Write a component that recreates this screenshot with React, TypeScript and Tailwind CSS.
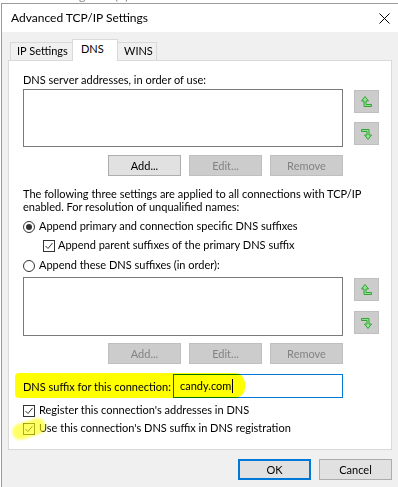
import clsx from "clsx";

function Btn({ label, disabled }: { label: string; disabled?: boolean }) {
  return (
    <div
      className={clsx(
        "h-[21px] w-[73px] border flex items-center justify-center leading-none",
        disabled
          ? "bg-[#cccccc] border-[#bfbfbf] text-[#838383]"
          : "bg-[#e1e1e1] border-[#adadad] text-black"
      )}
    >
      {label}
    </div>
  );
}

function ArrowIcon({ down }: { down?: boolean }) {
  return (
    <svg
      width="11"
      height="12"
      viewBox="0 0 11 12"
      className={down ? "rotate-180" : ""}
    >
      <path
        d="M4 0.5 L7.5 5 H5 V8.5 H10.5 V10.5 H3 V5 H0.5 Z"
        fill="#8ee38e"
        stroke="#35a335"
        strokeWidth="1"
        strokeLinejoin="miter"
      />
    </svg>
  );
}

function ArrowBtn({ down }: { down?: boolean }) {
  return (
    <div className="w-[25px] h-[23px] bg-[#cccccc] border border-[#bfbfbf] flex items-center justify-center">
      <ArrowIcon down={down} />
    </div>
  );
}

function Radio({ checked }: { checked?: boolean }) {
  return (
    <span className="w-[12px] h-[12px] rounded-full border border-[#333333] bg-white flex items-center justify-center shrink-0">
      {checked && <span className="w-[6px] h-[6px] rounded-full bg-[#333333]" />}
    </span>
  );
}

function Check() {
  return (
    <span className="w-[12px] h-[12px] border border-[#333333] bg-white flex items-center justify-center shrink-0">
      <svg width="10" height="10" viewBox="0 0 10 10">
        <path d="M1.5 5 L4 7.5 L8.5 2" stroke="#333333" strokeWidth="1" fill="none" />
      </svg>
    </span>
  );
}

function ListWithArrows({ h, gap }: { h: string; gap: string }) {
  return (
    <div className="flex">
      <div className={clsx("w-[320px] border border-[#7a7a7a] bg-white", h)} />
      <div className={clsx("ml-[11px] pt-[1px] flex flex-col", gap)}>
        <ArrowBtn />
        <ArrowBtn down />
      </div>
    </div>
  );
}

export default function App() {
  return (
    <div className="w-[398px] h-[487px] bg-white overflow-hidden flex flex-col font-['Lato',sans-serif] text-[11px] text-black whitespace-nowrap">
      {/* window behind, mostly hidden */}
      <div className="h-[3px] shrink-0 overflow-hidden pl-[10px]">
        <div className="-mt-[12px] h-[16px] leading-[16px] text-[12px] text-[#8a8a8a]">
          Connect using: Intel(R) Ethernet Connection I219-LM
        </div>
      </div>

      <div className="flex-1 ml-px border-l border-t border-[#9a9a9a] flex flex-col bg-[#f0f0f0]">
        {/* title bar */}
        <div className="h-[28px] bg-white flex items-center justify-between pl-[9px] pr-[8px]">
          <span className="text-[12px]">Advanced TCP/IP Settings</span>
          <svg width="11" height="11" viewBox="0 0 11 11">
            <path d="M0.5 0.5 L10.5 10.5 M10.5 0.5 L0.5 10.5" stroke="#000" strokeWidth="1" />
          </svg>
        </div>

        <div className="pl-[6px] pr-[6px] flex flex-col">
          {/* tabs */}
          <div className="mt-[7px] flex items-end pl-[2px]">
            <div className="h-[18px] w-[63px] border border-b-0 border-[#d9d9d9] bg-[#f0f0f0] pl-[6px] flex items-center">
              IP Settings
            </div>
            <div className="h-[22px] w-[46px] -ml-px border border-b-0 border-[#d9d9d9] bg-white relative z-10 -mb-px pl-[8px] flex items-center pb-[2px]">
              DNS
            </div>
            <div className="h-[18px] w-[40px] -ml-px border border-b-0 border-[#d9d9d9] bg-[#f0f0f0] pl-[6px] flex items-center">
              WINS
            </div>
          </div>

          {/* tab panel */}
          <div className="w-[384px] h-[390px] border border-[#d9d9d9] bg-white pl-[14px] flex flex-col">
            <div className="mt-[12px] h-[13px] leading-[13px]">DNS server addresses, in order of use:</div>
            <div className="mt-[3px]">
              <ListWithArrows h="h-[58px]" gap="gap-[9px]" />
            </div>
            <div className="mt-[8px] w-[320px] flex justify-end gap-[8px]">
              <Btn label="Add..." />
              <Btn label="Edit..." disabled />
              <Btn label="Remove" disabled />
            </div>

            <div className="mt-[11px] leading-[13px]">
              The following three settings are applied to all connections with TCP/IP
              <br />
              enabled. For resolution of unqualified names:
            </div>

            <div className="mt-[7px] h-[13px] flex items-center gap-[4px]">
              <Radio checked />
              <span>Append primary and connection specific DNS suffixes</span>
            </div>
            <div className="mt-[6px] h-[13px] pl-[20px] flex items-center gap-[3px]">
              <Check />
              <span>Append parent suffixes of the primary DNS suffix</span>
            </div>
            <div className="mt-[7px] h-[13px] flex items-center gap-[4px]">
              <Radio />
              <span>Append these DNS suffixes (in order):</span>
            </div>

            <div className="mt-[5px]">
              <ListWithArrows h="h-[59px]" gap="gap-[10px]" />
            </div>
            <div className="mt-[7px] w-[320px] flex justify-end gap-[8px]">
              <Btn label="Add..." disabled />
              <Btn label="Edit..." disabled />
              <Btn label="Remove" disabled />
            </div>

            <div className="mt-[10px] h-[24px] w-[320px] flex items-center relative">
              <span className="pt-[2px] w-[150px]">DNS suffix for this connection:</span>
              <div className="h-[24px] w-[170px] border border-[#0078d7] bg-white flex items-center pl-[6px]">
                <span>candy.com</span>
                <span className="ml-[1px] w-px h-[14px] bg-black" />
              </div>
              <div className="absolute -left-[8px] -top-[1px] w-[230px] h-[25px] bg-[#ffff00] mix-blend-multiply rounded-l-[4px] rounded-r-[10px] pointer-events-none" />
            </div>

            <div className="mt-[6px] h-[13px] flex items-center gap-[4px]">
              <Check />
              <span>Register this connection's addresses in DNS</span>
            </div>
            <div className="mt-[5px] h-[13px] flex items-center gap-[4px] relative">
              <Check />
              <span>Use this connection's DNS suffix in DNS registration</span>
              <div className="absolute -left-[11px] -top-[1px] w-[34px] h-[16px] rounded-full bg-[#ffff00]/60 -rotate-[18deg] blur-[1px] pointer-events-none" />
            </div>
          </div>

          {/* dialog buttons */}
          <div className="mt-[9px] flex justify-end gap-[8px]">
            <div className="h-[21px] w-[73px] border-2 border-[#0078d7] bg-[#e1e1e1] flex items-center justify-center leading-none">
              OK
            </div>
            <div className="h-[21px] w-[73px] border border-[#adadad] bg-[#e1e1e1] flex items-center justify-center leading-none">
              Cancel
            </div>
          </div>
        </div>
      </div>
    </div>
  );
}
